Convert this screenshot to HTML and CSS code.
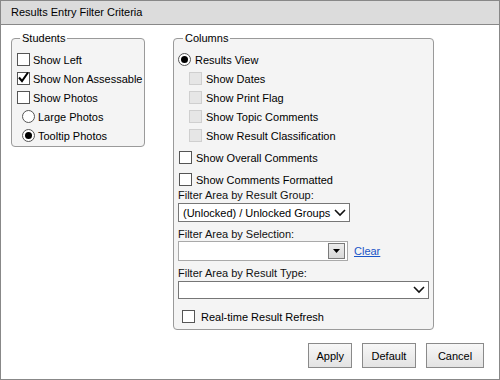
FILE: index.html
```html
<!DOCTYPE html>
<html lang="en">

<head>
    <meta charset="UTF-8">
    <title>Results Entry Filter Criteria</title>
    <link rel="stylesheet" href="styles.css">
</head>

<body>
    <div class="dialog">
        <div class="title">Results Entry Filter Criteria</div>

        <div class="panels">
            <fieldset class="group students">
                <legend>Students</legend>
                <div class="row"><span class="box"></span>Show Left</div>
                <div class="row">
                    <span class="box checked">
                        <svg width="13" height="13" viewBox="0 0 13 13"><polyline points="2,6.5 5,10 11,1.5" fill="none" stroke="#000" stroke-width="2"/></svg>
                    </span>Show Non Assessable
                </div>
                <div class="row"><span class="box"></span>Show Photos</div>
                <div class="row sub"><span class="radio"></span>Large Photos</div>
                <div class="row sub"><span class="radio on"></span>Tooltip Photos</div>
            </fieldset>

            <fieldset class="group columns">
                <legend>Columns</legend>
                <div class="row"><span class="radio on"></span>Results View</div>
                <div class="row indent"><span class="box off"></span>Show Dates</div>
                <div class="row indent"><span class="box off"></span>Show Print Flag</div>
                <div class="row indent"><span class="box off"></span>Show Topic Comments</div>
                <div class="row indent"><span class="box off"></span>Show Result Classification</div>
                <div class="row spaced nudge"><span class="box"></span>Show Overall Comments</div>
                <div class="row spaced nudge"><span class="box"></span>Show Comments Formatted</div>

                <div class="field-label">Filter Area by Result Group:</div>
                <div class="select short">
                    <span>(Unlocked) / Unlocked Groups</span>
                    <svg width="12" height="8" viewBox="0 0 12 8"><polyline points="1,1 6,6 11,1" fill="none" stroke="#111" stroke-width="1.6"/></svg>
                </div>

                <div class="field-label gap">Filter Area by Selection:</div>
                <div class="combo-row">
                    <div class="combo">
                        <span class="drop-btn">
                            <svg width="7" height="4" viewBox="0 0 7 4"><polygon points="0,0 7,0 3.5,4" fill="#000"/></svg>
                        </span>
                    </div>
                    <a href="#" class="clear">Clear</a>
                </div>

                <div class="field-label gap">Filter Area by Result Type:</div>
                <div class="select wide">
                    <span></span>
                    <svg width="12" height="8" viewBox="0 0 12 8"><polyline points="1,1 6,6 11,1" fill="none" stroke="#111" stroke-width="1.6"/></svg>
                </div>

                <div class="row refresh"><span class="box"></span>Real-time Result Refresh</div>
            </fieldset>
        </div>

        <div class="actions">
            <button class="apply">Apply</button>
            <button class="default">Default</button>
            <button class="cancel">Cancel</button>
        </div>
    </div>
</body>

</html>
```

FILE: styles.css
```css
body {
    margin: 0;
    font-family: "Liberation Sans", Arial, sans-serif;
    font-size: 11px;
    color: #000;
}

.dialog {
    width: 500px;
    height: 380px;
    box-sizing: border-box;
    border: 1px solid #888;
    background: #fff;
}

.title {
    height: 23px;
    line-height: 23px;
    padding-left: 10px;
    background: #dcdcdc;
    border-bottom: 1px solid #888;
}

.panels {
    display: flex;
    align-items: flex-start;
    padding: 6px 0 0 10px;
}

.group {
    margin: 0;
    box-sizing: border-box;
    border: 1px solid #9a9a9a;
    border-radius: 4px;
    background: #f4f4f4;
    padding: 5px 5px 1px 5px;
    min-width: 0;
}

.group legend {
    line-height: 14px;
    padding: 0 2px;
    margin-left: 3px;
}

.students {
    width: 134px;
}

.columns {
    width: 261px;
    margin-left: 28px;
    padding: 5px 4px 3px 4px;
}

.columns legend {
    margin-left: 5px;
}

.row {
    display: flex;
    align-items: center;
    height: 19px;
    white-space: nowrap;
}

.sub {
    padding-left: 5px;
}

.box {
    width: 13px;
    height: 13px;
    box-sizing: border-box;
    border: 1px solid #555;
    background: #fff;
    margin-right: 3px;
    flex: none;
    position: relative;
}

.box svg {
    position: absolute;
    left: -1px;
    top: -2px;
}

.box.off {
    border-color: #cfcfcf;
    background: #e6e6e6;
}

.radio {
    width: 13px;
    height: 13px;
    box-sizing: border-box;
    border: 1px solid #555;
    border-radius: 50%;
    background: #fff;
    margin-right: 3px;
    flex: none;
    display: flex;
    align-items: center;
    justify-content: center;
}

.radio.on::after {
    content: "";
    width: 7px;
    height: 7px;
    border-radius: 50%;
    background: #000;
}

.columns .radio,
.columns .box {
    margin-right: 4px;
}

.indent {
    padding-left: 11px;
}

.nudge {
    padding-left: 1px;
}

.spaced {
    margin-top: 3px;
}

.field-label {
    line-height: 13px;
    color: #111;
}

.field-label.gap {
    margin-top: 6px;
}

.select {
    display: flex;
    align-items: center;
    justify-content: space-between;
    box-sizing: border-box;
    border: 1px solid #767676;
    background: #fff;
    padding: 0 3px 0 4px;
    margin-top: 1px;
    white-space: nowrap;
}

.select.short {
    width: 172px;
    height: 19px;
}

.select.wide {
    width: 251px;
    height: 18px;
    margin-top: 1px;
}

.combo-row {
    display: flex;
    align-items: center;
}

.combo {
    width: 170px;
    height: 20px;
    box-sizing: border-box;
    border: 1px solid #a9a9a9;
    background: #fff;
    display: flex;
    justify-content: flex-end;
    padding: 1px;
}

.drop-btn {
    width: 17px;
    height: 16px;
    box-sizing: border-box;
    border: 1px solid #7a7a7a;
    background: linear-gradient(#ececec, #d8d8d8);
    display: flex;
    align-items: center;
    justify-content: center;
    margin-right: 1px;
}

.clear {
    margin-left: 6px;
    color: #1a56c8;
    text-decoration: underline;
}

.refresh {
    margin-top: 8px;
    padding-left: 4px;
}

.refresh .box {
    margin-right: 6px;
}

.actions {
    display: flex;
    justify-content: flex-end;
    gap: 10px;
    margin-top: 13px;
    padding-right: 15px;
}

.actions button {
    height: 25px;
    font-family: inherit;
    font-size: 11px;
    color: #000;
    border: 1px solid #8a8a8a;
    background: linear-gradient(#f7f7f7, #e3e3e3);
    padding: 0 7px;
}

.actions .apply {
    min-width: 42px;
}

.actions .default {
    min-width: 54px;
}

.actions .cancel {
    min-width: 58px;
}
```
